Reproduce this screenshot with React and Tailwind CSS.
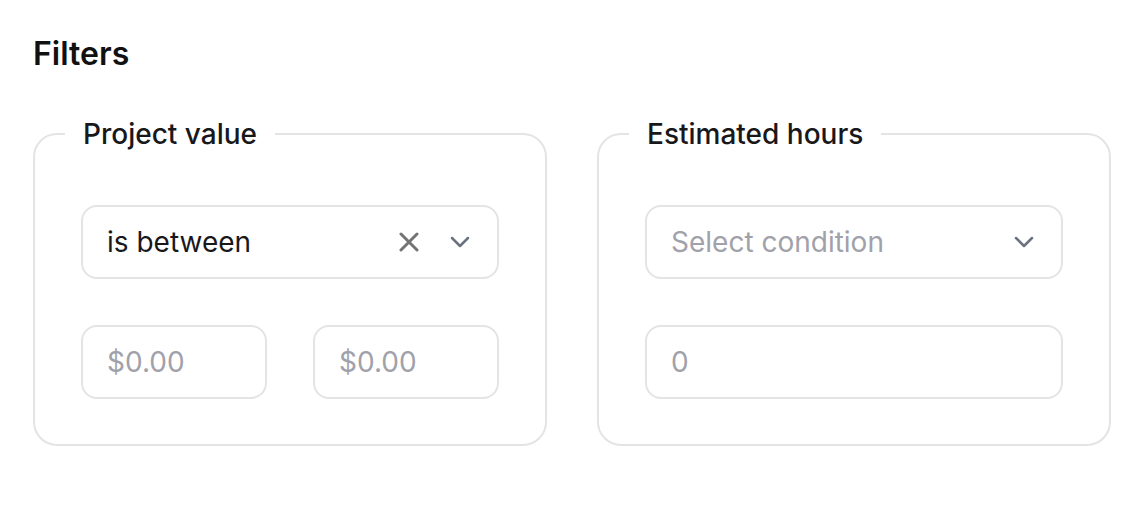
import React from 'react';

const ChevronDown = () => (
  <svg width="20" height="12" viewBox="0 0 20 12" fill="none" className="shrink-0">
    <path d="M2 2l8 8 8-8" stroke="#6b7280" strokeWidth="2.5" strokeLinecap="round" strokeLinejoin="round" />
  </svg>
);

const XIcon = () => (
  <svg width="20" height="20" viewBox="0 0 20 20" fill="none" className="shrink-0">
    <path d="M2 2l16 16M18 2L2 18" stroke="#737373" strokeWidth="3" strokeLinecap="round" />
  </svg>
);

const FilterGroup = ({ label, children }) => (
  <fieldset className="w-[514px] border-2 border-[#e4e4e7] rounded-[24px] px-[46px] pt-[55px] pb-[45px]">
    <legend className="-ml-4 px-[18px] text-[28px] leading-8 font-medium text-[#18181b]">{label}</legend>
    {children}
  </fieldset>
);

const SelectBox = ({ value, placeholder, clearable }) => (
  <div className="h-[74px] flex items-center border-2 border-[#e4e4e7] rounded-2xl pl-6 pr-[27px]">
    <span className={`flex-1 text-[28px] ${value ? 'text-[#18181b]' : 'text-[#a1a1aa]'}`}>
      {value || placeholder}
    </span>
    {clearable && (
      <span className="mr-[31px]">
        <XIcon />
      </span>
    )}
    <ChevronDown />
  </div>
);

const TextInput = ({ placeholder, className = '' }) => (
  <input
    placeholder={placeholder}
    className={`h-[74px] border-2 border-[#e4e4e7] rounded-2xl px-6 text-[28px] text-[#18181b] placeholder:text-[#a1a1aa] outline-none ${className}`}
  />
);

export default function App() {
  return (
    <div className="bg-white min-h-[524px] pl-[33px] pt-[36px]" style={{ fontFamily: 'Inter, "Noto Sans", sans-serif' }}>
      <h2 className="text-[32px] leading-9 font-semibold text-[#111111]">Filters</h2>

      <div className="flex gap-[50px] mt-[46px]">
        {/* Project value */}
        <FilterGroup label="Project value">
          <SelectBox value="is between" clearable />
          <div className="flex gap-[46px] mt-[46px]">
            <TextInput placeholder="$0.00" className="w-[186px]" />
            <TextInput placeholder="$0.00" className="w-[186px]" />
          </div>
        </FilterGroup>

        {/* Estimated hours */}
        <FilterGroup label="Estimated hours">
          <SelectBox placeholder="Select condition" />
          <div className="mt-[46px]">
            <TextInput placeholder="0" className="w-full" />
          </div>
        </FilterGroup>
      </div>
    </div>
  );
}
